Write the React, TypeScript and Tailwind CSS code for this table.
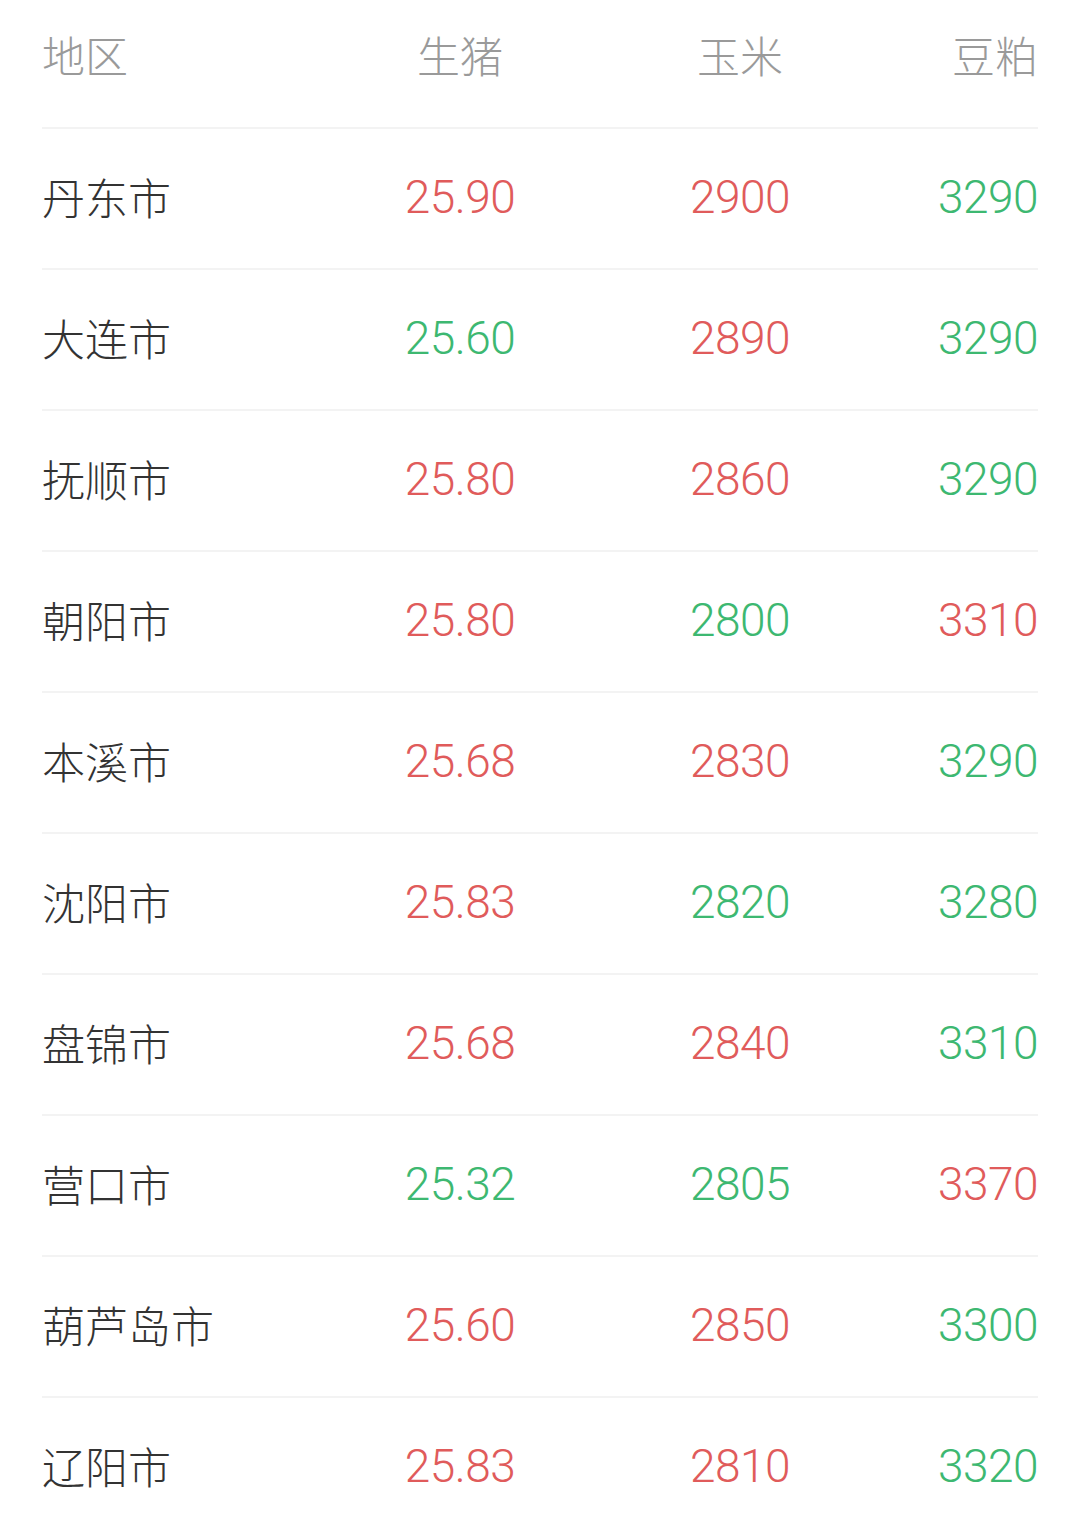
const rows: { name: string; pig: [string, "up" | "down"]; corn: [string, "up" | "down"]; meal: [string, "up" | "down"] }[] = [
  { name: "丹东市", pig: ["25.90", "up"], corn: ["2900", "up"], meal: ["3290", "down"] },
  { name: "大连市", pig: ["25.60", "down"], corn: ["2890", "up"], meal: ["3290", "down"] },
  { name: "抚顺市", pig: ["25.80", "up"], corn: ["2860", "up"], meal: ["3290", "down"] },
  { name: "朝阳市", pig: ["25.80", "up"], corn: ["2800", "down"], meal: ["3310", "up"] },
  { name: "本溪市", pig: ["25.68", "up"], corn: ["2830", "up"], meal: ["3290", "down"] },
  { name: "沈阳市", pig: ["25.83", "up"], corn: ["2820", "down"], meal: ["3280", "down"] },
  { name: "盘锦市", pig: ["25.68", "up"], corn: ["2840", "up"], meal: ["3310", "down"] },
  { name: "营口市", pig: ["25.32", "down"], corn: ["2805", "down"], meal: ["3370", "up"] },
  { name: "葫芦岛市", pig: ["25.60", "up"], corn: ["2850", "up"], meal: ["3300", "down"] },
  { name: "辽阳市", pig: ["25.83", "up"], corn: ["2810", "up"], meal: ["3320", "down"] },
];

const cjk = "font-['Noto_Sans_CJK_SC',sans-serif] font-light";
const num = "font-['Roboto',sans-serif] font-light text-[46px] leading-none tracking-[-0.5px]";

function tone(t: "up" | "down") {
  return t === "up" ? "text-[#e05b5b]" : "text-[#3db871]";
}

export default function App() {
  return (
    <div className="w-[1080px] h-[1532px] overflow-hidden bg-white px-[42px]">
      <div className={`grid grid-cols-[300px_236px_324px_1fr] items-center h-[127px] pb-[18px] text-[43px] text-[#9a9a9a] ${cjk}`}>
        <div>地区</div>
        <div className="text-center">生猪</div>
        <div className="text-center">玉米</div>
        <div className="text-right">豆粕</div>
      </div>
      {rows.map((r) => (
        <div key={r.name} className="grid grid-cols-[300px_236px_324px_1fr] items-center h-[141px] pb-[4px] border-t-2 border-[#f3f3f3]">
          <div className={`text-[43px] text-[#333333] ${cjk}`}>{r.name}</div>
          <div className={`text-center ${num} ${tone(r.pig[1])}`}>{r.pig[0]}</div>
          <div className={`text-center ${num} ${tone(r.corn[1])}`}>{r.corn[0]}</div>
          <div className={`text-right ${num} ${tone(r.meal[1])}`}>{r.meal[0]}</div>
        </div>
      ))}
    </div>
  );
}
